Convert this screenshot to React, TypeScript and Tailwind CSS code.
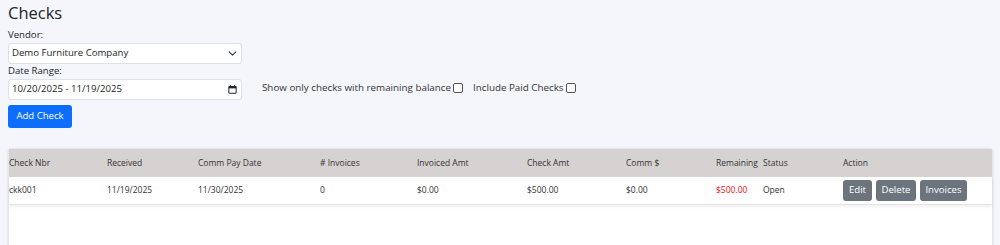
import React from 'react';

const font = { fontFamily: '"Open Sans", "Noto Sans", sans-serif' };

const cols = [
  { label: 'Check Nbr', w: 'w-[98px]' },
  { label: 'Received', w: 'w-[91px]' },
  { label: 'Comm Pay Date', w: 'w-[122px]' },
  { label: '# Invoices', w: 'w-[97px]' },
  { label: 'Invoiced Amt', w: 'w-[110px]' },
  { label: 'Check Amt', w: 'w-[99px]' },
  { label: 'Comm $', w: 'w-[90px]' },
  { label: 'Remaining', w: 'w-[47px]' },
  { label: 'Status', w: 'w-[80px]' },
  { label: 'Action', w: '' },
];

const row = ['ckk001', '11/19/2025', '11/30/2025', '0', '$0.00', '$500.00', '$0.00', '$500.00', 'Open'];

const App: React.FC = () => {
  return (
    <div className="w-[1000px] h-[245px] overflow-hidden bg-[#f5f5fc] text-[#212529]" style={font}>
      <div className="px-2 pt-[2px]">
        <h1 className="text-[16.5px] leading-[22px] font-normal">Checks</h1>

        <div className="flex items-end gap-5">
          <div className="w-[234px]">
            <label className="block text-[9.6px] leading-[12px] mt-[5px]">Vendor:</label>
            <div className="mt-[2px] h-[21px] bg-white border border-[#dee2e6] rounded-[3px] flex items-center justify-between pl-[3px] pr-[4px] text-[9.6px]">
              <span>Demo Furniture Company</span>
              <svg width="9" height="9" viewBox="0 0 16 16">
                <path d="M2 5l6 6 6-6" fill="none" stroke="#343a40" strokeWidth="2" strokeLinecap="round" strokeLinejoin="round" />
              </svg>
            </div>
            <label className="block text-[9.6px] leading-[12px] mt-[1px]">Date Range:</label>
            <div className="mt-[2px] h-[21px] bg-white border border-[#dee2e6] rounded-[3px] flex items-center justify-between pl-[3px] pr-[4px] text-[9.6px]">
              <span>10/20/2025 - 11/19/2025</span>
              <svg width="9" height="9" viewBox="0 0 16 16">
                <rect x="1.5" y="2.5" width="13" height="12" rx="1" fill="none" stroke="#212529" strokeWidth="1.8" />
                <rect x="1.5" y="2.5" width="13" height="3.5" fill="#212529" />
                <path d="M4.5 0.5v3M11.5 0.5v3" stroke="#212529" strokeWidth="1.8" />
              </svg>
            </div>
          </div>
          <div className="flex items-center text-[9.8px] h-[21px] pb-[3px] text-[#333]">
            <span>Show only checks with remaining balance</span>
            <span className="inline-block w-[10px] h-[10px] border border-[#555] rounded-[2px] bg-white ml-[2px]" />
            <span className="ml-[10px]">Include Paid Checks</span>
            <span className="inline-block w-[10px] h-[10px] border border-[#555] rounded-[2px] bg-white ml-[2px]" />
          </div>
        </div>

        <button className="block mt-[5px] h-[23px] w-[64px] bg-[#0d6efd] text-white text-[9.6px] rounded-[3px]">
          Add Check
        </button>
      </div>

      <div className="ml-2 mr-[7px] mt-5 h-[200px] bg-white border border-[#e6e6ee] rounded-t-[3px] shadow-sm">
        <div className="flex items-center h-[28px] bg-[#d6d2d2] text-[8.5px] text-[#333]">
          {cols.map((c) => (
            <div key={c.label} className={`${c.w} shrink-0 whitespace-nowrap`}>
              {c.label}
            </div>
          ))}
        </div>
        <div className="flex items-center h-[28px] text-[8.5px] text-[#333] border-b border-[#e3e3e3] shadow-[0_2px_3px_rgba(0,0,0,0.06)]">
          {row.map((v, i) => (
            <div
              key={i}
              className={`${cols[i].w} shrink-0 whitespace-nowrap ${i === 7 ? 'text-[#ee1111]' : ''}`}
            >
              {v}
            </div>
          ))}
          <div className="flex gap-[4px] text-[9.6px]">
            <button className="h-[21px] w-[29px] bg-[#6c757d] text-white rounded-[3px]">Edit</button>
            <button className="h-[21px] w-[40px] bg-[#6c757d] text-white rounded-[3px]">Delete</button>
            <button className="h-[21px] w-[47px] bg-[#6c757d] text-white rounded-[3px]">Invoices</button>
          </div>
        </div>
      </div>
    </div>
  );
};

export default App;
